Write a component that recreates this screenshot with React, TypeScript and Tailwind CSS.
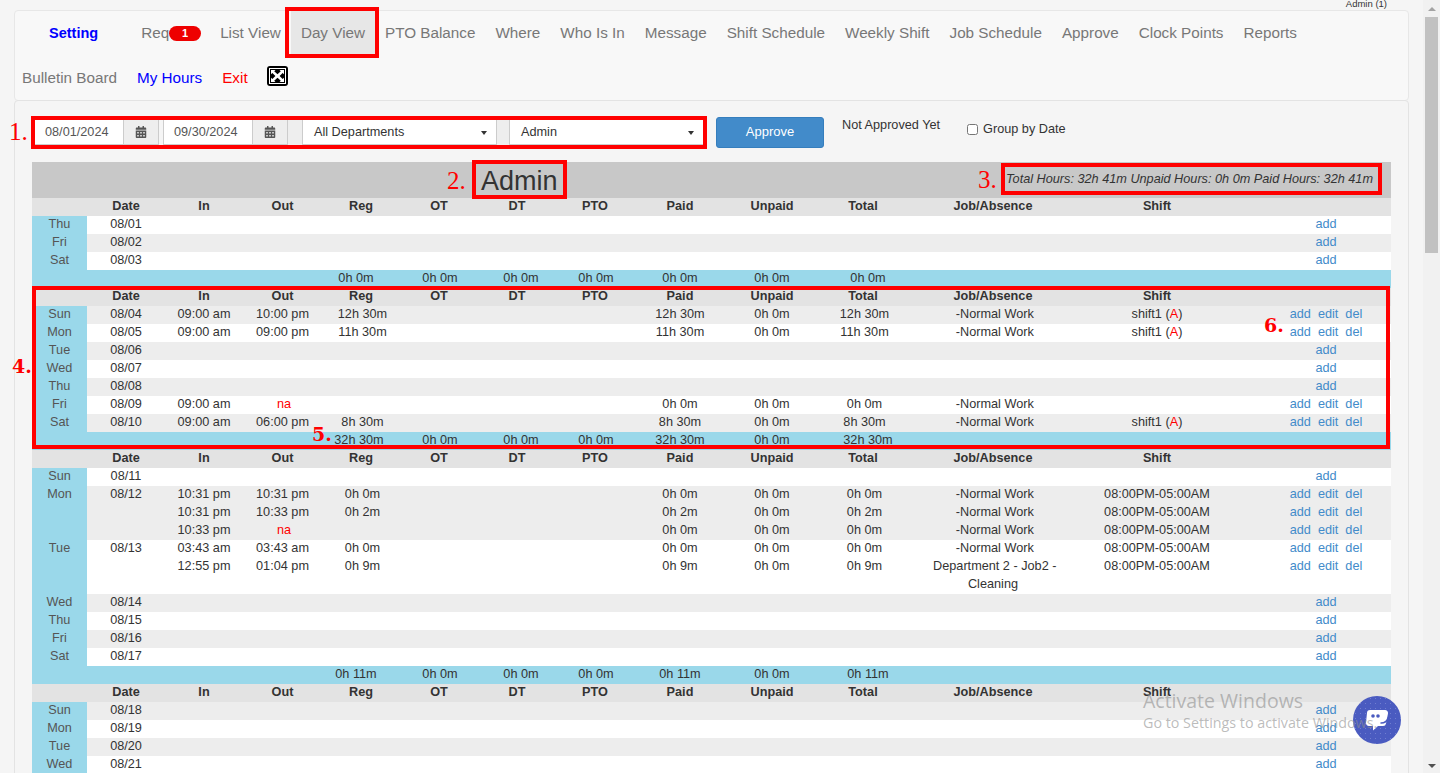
import { FaCalendarAlt } from "react-icons/fa";

type Row = {
    day?: string;
    date?: string;
    gray?: boolean;
    in?: string;
    out?: string;
    reg?: string;
    paid?: string;
    unpaid?: string;
    total?: string;
    job?: string;
    shift?: string;
    approved?: boolean;
    full?: boolean;
};

const normal = "\u00a0-Normal Work";
const night = "08:00PM-05:00AM";

const navItems = ["List View", "Day View", "PTO Balance", "Where", "Who Is In", "Message", "Shift Schedule", "Weekly Shift", "Job Schedule", "Approve", "Clock Points", "Reports"];
const headers = ["", "Date", "In", "Out", "Reg", "OT", "DT", "PTO", "Paid", "Unpaid", "Total", "Job/Absence", "Shift", "", ""];
const widths = ["w-[55px]", "w-[78px]", "w-[78px]", "w-[79px]", "w-[78px]", "w-[78px]", "w-[78px]", "w-[78px]", "w-[92px]", "w-[92px]", "w-[90px]", "w-[170px]", "w-[158px]", "w-[25px]", "w-[130px]"];

const weeks: { rows: Row[]; totals?: string[] }[] = [
    {
        rows: [
            { day: "Thu", date: "08/01" },
            { day: "Fri", date: "08/02", gray: true },
            { day: "Sat", date: "08/03" },
        ],
        totals: ["0h 0m", "0h 0m", "0h 0m", "0h 0m", "0h 0m", "0h 0m", "0h 0m"],
    },
    {
        rows: [
            { day: "Sun", date: "08/04", gray: true, in: "09:00 am", out: "10:00 pm", reg: "12h 30m", paid: "12h 30m", unpaid: "0h 0m", total: "12h 30m", job: normal, shift: "shift1", approved: true, full: true },
            { day: "Mon", date: "08/05", in: "09:00 am", out: "09:00 pm", reg: "11h 30m", paid: "11h 30m", unpaid: "0h 0m", total: "11h 30m", job: normal, shift: "shift1", approved: true, full: true },
            { day: "Tue", date: "08/06", gray: true },
            { day: "Wed", date: "08/07" },
            { day: "Thu", date: "08/08", gray: true },
            { day: "Fri", date: "08/09", in: "09:00 am", out: "na", paid: "0h 0m", unpaid: "0h 0m", total: "0h 0m", job: normal, full: true },
            { day: "Sat", date: "08/10", gray: true, in: "09:00 am", out: "06:00 pm", reg: "8h 30m", paid: "8h 30m", unpaid: "0h 0m", total: "8h 30m", job: normal, shift: "shift1", approved: true, full: true },
        ],
        totals: ["32h 30m", "0h 0m", "0h 0m", "0h 0m", "32h 30m", "0h 0m", "32h 30m"],
    },
    {
        rows: [
            { day: "Sun", date: "08/11" },
            { day: "Mon", date: "08/12", gray: true, in: "10:31 pm", out: "10:31 pm", reg: "0h 0m", paid: "0h 0m", unpaid: "0h 0m", total: "0h 0m", job: normal, shift: night, full: true },
            { gray: true, in: "10:31 pm", out: "10:33 pm", reg: "0h 2m", paid: "0h 2m", unpaid: "0h 0m", total: "0h 2m", job: normal, shift: night, full: true },
            { gray: true, in: "10:33 pm", out: "na", paid: "0h 0m", unpaid: "0h 0m", total: "0h 0m", job: normal, shift: night, full: true },
            { day: "Tue", date: "08/13", in: "03:43 am", out: "03:43 am", reg: "0h 0m", paid: "0h 0m", unpaid: "0h 0m", total: "0h 0m", job: normal, shift: night, full: true },
            { in: "12:55 pm", out: "01:04 pm", reg: "0h 9m", paid: "0h 9m", unpaid: "0h 0m", total: "0h 9m", job: "\u00a0Department 2 - Job2 - Cleaning", shift: night, full: true },
            { day: "Wed", date: "08/14", gray: true },
            { day: "Thu", date: "08/15" },
            { day: "Fri", date: "08/16", gray: true },
            { day: "Sat", date: "08/17" },
        ],
        totals: ["0h 11m", "0h 0m", "0h 0m", "0h 0m", "0h 11m", "0h 0m", "0h 11m"],
    },
    {
        rows: [
            { day: "Sun", date: "08/18", gray: true },
            { day: "Mon", date: "08/19" },
            { day: "Tue", date: "08/20", gray: true },
            { day: "Wed", date: "08/21" },
        ],
    },
];

function ExpandIcon() {
    return (
        <svg width="21" height="20" viewBox="0 0 21 20">
            <rect width="21" height="20" rx="3" fill="#000" />
            <rect x="2.5" y="2.5" width="16" height="15" fill="none" stroke="#fff" />
            <path d="M4 4h4.5L7.2 5.3l3.3 3 3.3-3L12.5 4H17v4.3l-1.4-1.3-3 3 3 3 1.4-1.3V16h-4.5l1.3-1.3-3.3-3-3.3 3L8.5 16H4v-4.3L5.4 13l3-3-3-3L4 8.3z" fill="#fff" />
        </svg>
    );
}

function ChatIcon() {
    return (
        <svg width="48" height="48" viewBox="0 0 48 48">
            <defs>
                <pattern id="dots" width="5" height="5" patternUnits="userSpaceOnUse">
                    <circle cx="2.5" cy="2.5" r="0.5" fill="#7d8ad6" />
                </pattern>
            </defs>
            <circle cx="24" cy="24" r="24" fill="#4a5bc0" />
            <circle cx="24" cy="24" r="24" fill="url(#dots)" />
            <path d="M17 14h15a3 3 0 0 1 3 3.5l-2 10a3 3 0 0 1-3 2.5h-5l-5 4.5V30h-4a3 3 0 0 1-3-3.5l1-9.500A3 3 0 0 1 17 14z" fill="#fff" />
            <circle cx="20" cy="20" r="1.800" fill="#4a5bc0" />
            <circle cx="25" cy="20" r="1.800" fill="#4a5bc0" />
            <path d="M28 27c3 0 6-1.500 7-5" fill="none" stroke="#4a5bc0" strokeWidth="1.500" strokeLinecap="round" />
        </svg>
    );
}

function Nav() {
    return (
        <nav className="mx-[14px] h-[91px] rounded-[4px] border border-[#e7e7e7] bg-[#f8f8f8] text-[15.250px] text-[#777]">
            <ul className="flex flex-wrap">
                <li className="ml-[24px] mr-[23px] flex h-[45px] items-center px-[10px] text-[14.500px] font-bold text-[#0000ff]">Setting</li>
                <li className="flex h-[45px] items-center pl-[10px] pr-[9px]">
                    Req
                    <span className="flex h-[15px] w-[32px] items-center justify-center rounded-full bg-[#ee0000] text-[11px] font-bold text-white">1</span>
                </li>
                {navItems.map((item) => (
                    <li key={item} className={`flex h-[45px] items-center px-[10px] ${item === "Day View" ? "bg-[#e7e7e7]" : ""}`}>
                        {item}
                    </li>
                ))}
                <li className="flex h-[44px] items-center pl-[7px] pr-[10px]">Bulletin Board</li>
                <li className="flex h-[44px] items-center px-[10px] text-[#0000ff]">My Hours</li>
                <li className="flex h-[44px] items-center px-[10px] text-[#ff0000]">Exit</li>
                <li className="flex h-[44px] items-start pl-[9px] pt-[10px]">
                    <ExpandIcon />
                </li>
            </ul>
        </nav>
    );
}

function DateInput({ value, last }: { value: string; last?: boolean }) {
    return (
        <div className={`flex h-[26px] ${last ? "" : "mr-[4px]"}`}>
            <div className="flex w-[90px] items-center border border-[#ccc] bg-white pl-[10px] pt-[2px] text-[12.700px] text-[#555]">{value}</div>
            <div className="flex w-[35px] items-center justify-center border-y border-r border-[#ccc] bg-[#eee] text-[#555]">
                <FaCalendarAlt size={12} />
            </div>
        </div>
    );
}

function SelectBox({ label }: { label: string }) {
    return (
        <div className="flex h-[26px] w-[195px] items-center justify-between border border-[#ccc] bg-white pl-[11px] pr-[9px] pt-[1px] text-[12.700px] text-[#333]">
            {label}
            <span className="h-0 w-0 border-x-[3.500px] border-t-[4px] border-x-transparent border-t-[#333]" />
        </div>
    );
}

function Filters() {
    return (
        <div className="mb-[17px] flex h-[26px] items-start pl-[2px] text-[12.700px] text-[#333]">
            <DateInput value="08/01/2024" />
            <DateInput value="09/30/2024" last />
            <div className="h-[26px] w-[14px] bg-[#eee]" />
            <SelectBox label="All Departments" />
            <div className="h-[26px] w-[12px] bg-[#eee]" />
            <SelectBox label="Admin" />
            <button className="ml-[12px] -mt-[2px] h-[31px] w-[108px] rounded-[3px] border border-[#357ebd] bg-[#428bca] pb-[2px] text-[13px] text-white">Approve</button>
            <span className="ml-[18px] -mt-[1px] leading-[14px]">Not Approved Yet</span>
            <label className="ml-[27px] mt-[3px] flex items-center leading-[14px]">
                <input type="checkbox" className="mr-[5px] h-[11px] w-[11px]" readOnly />
                Group by Date
            </label>
        </div>
    );
}

function HeaderRow() {
    return (
        <tr className="bg-[#e3e3e3] font-bold">
            {headers.map((h, i) => (
                <td key={i}>{h}</td>
            ))}
        </tr>
    );
}

function DayRow({ row }: { row: Row }) {
    const blank = !row.in;
    return (
        <tr className={row.gray ? "bg-[#ededed]" : "bg-white"}>
            <td className="bg-[#9ad8ea] align-top text-[#555]">{row.day}</td>
            <td className="align-top">{row.date}</td>
            <td className="align-top">{row.in}</td>
            <td className={row.out === "na" ? "pl-[3px] align-top text-[#ff0000]" : "align-top"}>{row.out}</td>
            <td className="pl-[3px] align-top">{row.reg}</td>
            <td />
            <td />
            <td />
            <td className="align-top">{row.paid}</td>
            <td className="align-top">{row.unpaid}</td>
            <td className="pl-[3px] align-top">{row.total}</td>
            <td className="align-top">
                <div className="-my-px leading-[18px]">{row.job}</div>
            </td>
            <td className="align-top">
                {row.shift}
                {row.approved && (
                    <>
                        {" "}(<span className="text-[#ff0000]">A</span>)
                    </>
                )}
            </td>
            <td />
            <td className="align-top text-[#428bca]">
                <div className="flex justify-center gap-[7px]">
                    <span>add</span>
                    {row.full && !blank && <span>edit</span>}
                    {row.full && !blank && <span>del</span>}
                </div>
            </td>
        </tr>
    );
}

function TotalRow({ values }: { values: string[] }) {
    return (
        <tr className="bg-[#9ad8ea]">
            <td />
            <td />
            <td />
            <td />
            <td className={values[0] === "32h 30m" ? "pr-[4px]" : "pr-[10px]"}>{values[0]}</td>
            <td className="pl-[2px]">{values[1]}</td>
            <td className="pl-[8px]">{values[2]}</td>
            <td className="pl-[2px]">{values[3]}</td>
            <td>{values[4]}</td>
            <td>{values[5]}</td>
            <td className="pl-[10px]">{values[6]}</td>
            <td colSpan={4} />
        </tr>
    );
}

function Week({ rows, totals }: { rows: Row[]; totals?: string[] }) {
    return (
        <>
            <HeaderRow />
            {rows.map((r, i) => (
                <DayRow key={i} row={r} />
            ))}
            {totals && <TotalRow values={totals} />}
        </>
    );
}

function Timesheet() {
    return (
        <div className="text-[12.700px] text-[#333]">
            <div className="flex h-[36px] items-center justify-between bg-[#c8c8c8] pl-[449px] pr-[18px]">
                <span className="mt-[2px] text-[27px] leading-[32px]">Admin</span>
                <span className="-mt-[1px] italic">Total Hours: 32h 41m Unpaid Hours: 0h 0m Paid Hours: 32h 41m</span>
            </div>
            <table className="w-[1359px] table-fixed border-collapse text-center leading-[16px] [&_td]:pb-[2px]">
                <colgroup>
                    {widths.map((w, i) => (
                        <col key={i} className={w} />
                    ))}
                </colgroup>
                <tbody>
                    {weeks.map((week, i) => (
                        <Week key={i} rows={week.rows} totals={week.totals} />
                    ))}
                </tbody>
            </table>
        </div>
    );
}

function Annotations() {
    const boxes = [
        "left-[285px] top-[7px] h-[51px] w-[94px]",
        "left-[31px] top-[116px] h-[33px] w-[676px]",
        "left-[472px] top-[160px] h-[39px] w-[95px]",
        "left-[1001px] top-[163px] h-[32px] w-[381px]",
        "left-[32px] top-[286px] h-[163px] w-[1358px]",
    ];
    return (
        <>
            {boxes.map((b) => (
                <div key={b} className={`pointer-events-none absolute border-[4px] border-[#ff0000] ${b}`} />
            ))}
            <span className="absolute left-[9px] top-[118px] font-['Liberation_Serif',serif] text-[25px] leading-[28px] text-[#ff0000]">1.</span>
            <span className="absolute left-[447px] top-[167px] font-['Liberation_Serif',serif] text-[25px] leading-[28px] text-[#ff0000]">2.</span>
            <span className="absolute left-[978px] top-[166px] font-['Liberation_Serif',serif] text-[25px] leading-[28px] text-[#ff0000]">3.</span>
            <span className="absolute left-[12px] top-[353px] font-['DejaVu_Serif',serif] text-[19px] font-bold leading-[26px] text-[#ff0000]">4.</span>
            <span className="absolute left-[312px] top-[421px] font-['DejaVu_Serif',serif] text-[19px] font-bold leading-[26px] text-[#ff0000]">5.</span>
            <span className="absolute left-[1264px] top-[312px] font-['DejaVu_Serif',serif] text-[19px] font-bold leading-[26px] text-[#ff0000]">6.</span>
        </>
    );
}

export default function App() {
    return (
        <div className="flex h-[773px] overflow-hidden bg-[#f5f5f5] font-['Liberation_Sans',Arial,sans-serif]">
            <div className="relative w-[1423px] shrink-0">
                <div className="h-[10px] pr-[36px] text-right text-[9.500px] leading-[8px] text-[#333]">Admin (1)</div>
                <Nav />
                <div className="mx-[14px] -mt-px h-[700px] rounded-[4px] border border-[#e3e3e3] bg-[#f5f5f5] px-[17px] pt-[18px]">
                    <Filters />
                    <Timesheet />
                </div>
                <Annotations />
                <div className="absolute left-[1353px] top-[696px]">
                    <ChatIcon />
                </div>
                <div className="pointer-events-none absolute left-[1143px] top-[688px] font-['Open_Sans',sans-serif] text-[#8f8f8f]/60">
                    <div className="text-[19.500px] leading-[26px]">Activate Windows</div>
                    <div className="-mt-px whitespace-nowrap text-[14.300px] leading-[20px]">Go to Settings to activate Windows.</div>
                </div>
            </div>
            <div className="relative w-[17px] shrink-0 bg-[#f1f1f1]">
                <div className="mx-auto mt-[7px] h-0 w-0 border-x-[4px] border-b-[4px] border-x-transparent border-b-[#a3a3a3]" />
                <div className="mx-[2px] mt-[6px] h-[236px] bg-[#c1c1c1]" />
                <div className="absolute bottom-[5px] left-[4.500px] h-0 w-0 border-x-[4px] border-t-[4px] border-x-transparent border-t-[#505050]" />
            </div>
        </div>
    );
}
